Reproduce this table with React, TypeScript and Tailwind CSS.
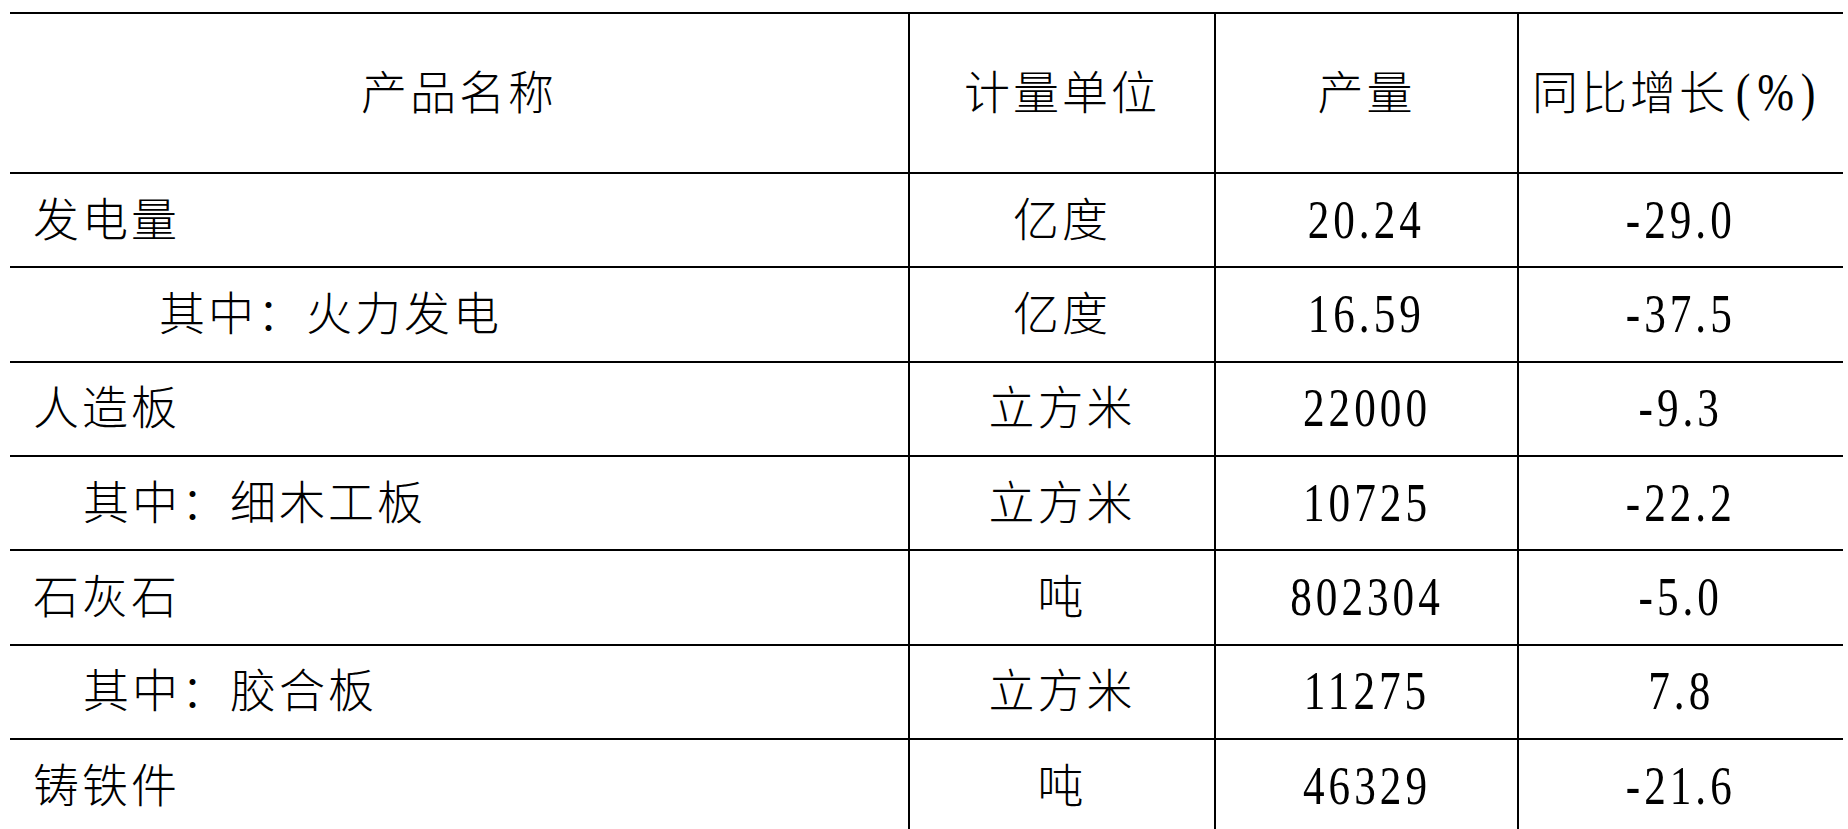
const rows = [
  { name: "发电量", indent: "pl-[23px]", unit: "亿度", output: "20.24", growth: "-29.0" },
  { name: "其中：火力发电", indent: "pl-[149px]", unit: "亿度", output: "16.59", growth: "-37.5" },
  { name: "人造板", indent: "pl-[23px]", unit: "立方米", output: "22000", growth: "-9.3" },
  { name: "其中：细木工板", indent: "pl-[73px]", unit: "立方米", output: "10725", growth: "-22.2" },
  { name: "石灰石", indent: "pl-[23px]", unit: "吨", output: "802304", growth: "-5.0" },
  { name: "其中：胶合板", indent: "pl-[73px]", unit: "立方米", output: "11275", growth: "7.8" },
  { name: "铸铁件", indent: "pl-[23px]", unit: "吨", output: "46329", growth: "-21.6" },
];

const cjk = "font-['Liberation_Serif','Noto_Sans_CJK_SC',serif]";

function Num({ value }: { value: string }) {
  // narrow tall digits, like the original 仿宋 numerals
  return <span className="inline-block scale-x-[0.8] text-[54px] tracking-[5px]">{value}</span>;
}

export default function App() {
  return (
    <div className={`min-h-screen bg-white pl-[10px] pt-[12px] text-black ${cjk}`}>
      <div className="w-[1833px]">
        {/* header */}
        <div className="grid h-[162px] grid-cols-[898px_306px_303px_326px] border-y-2 border-black">
          <div className="flex items-center justify-center text-[46px] font-light tracking-[3px]">产品名称</div>
          <div className="flex items-center justify-center border-l-2 border-black text-[46px] font-light tracking-[3px]">
            计量单位
          </div>
          <div className="flex items-center justify-center border-l-2 border-black text-[46px] font-light tracking-[3px]">
            产量
          </div>
          <div className="flex items-center justify-center border-l-2 border-black text-[46px] font-light tracking-[3px]">
            同比增长<span className="inline-block scale-x-[0.85] text-[52px] tracking-[8px]">(%)</span>
          </div>
        </div>

        {rows.map((r) => (
          <div
            key={r.name}
            className="grid h-[94.33px] grid-cols-[898px_306px_303px_326px] border-b-2 border-black"
          >
            <div className={`flex items-center text-[46px] font-light tracking-[3px] ${r.indent}`}>{r.name}</div>
            <div className="flex items-center justify-center border-l-2 border-black text-[46px] font-light tracking-[3px]">
              {r.unit}
            </div>
            <div className="flex items-center justify-center border-l-2 border-black">
              <Num value={r.output} />
            </div>
            <div className="flex items-center justify-center border-l-2 border-black">
              <Num value={r.growth} />
            </div>
          </div>
        ))}
      </div>
    </div>
  );
}
